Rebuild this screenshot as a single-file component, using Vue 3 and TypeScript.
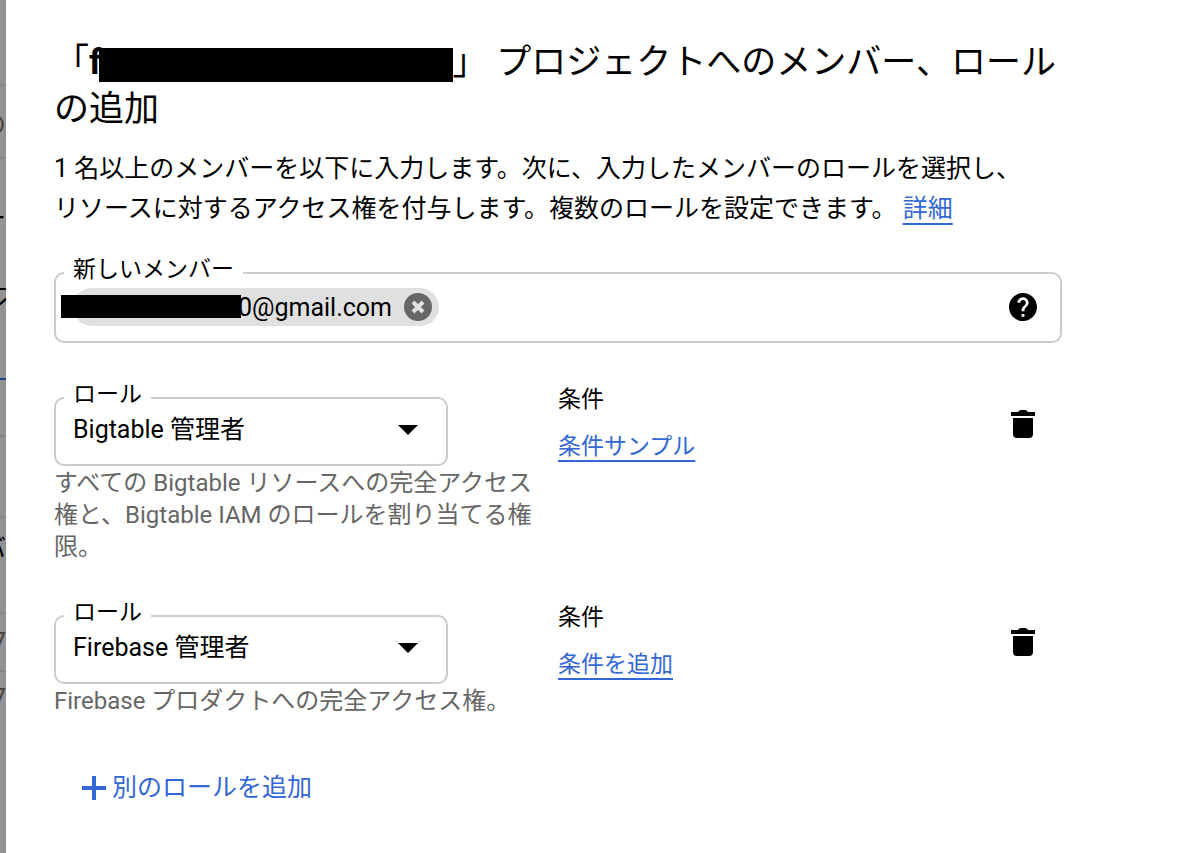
<script setup lang="ts">
import { ref } from 'vue'

interface RoleBinding {
  id: string
  role: string
  description: string
  conditionLink: string
}

const roleOptions: string[] = ['Bigtable 管理者', 'Firebase 管理者']

const bindings = ref<RoleBinding[]>([
  {
    id: 'role-bigtable',
    role: 'Bigtable 管理者',
    description:
      'すべての Bigtable リソースへの完全アクセス権と、Bigtable IAM のロールを割り当てる権限。',
    conditionLink: '条件サンプル',
  },
  {
    id: 'role-firebase',
    role: 'Firebase 管理者',
    description: 'Firebase プロダクトへの完全アクセス権。',
    conditionLink: '条件を追加',
  },
])
</script>

<template>
  <div class="screen">
    <div class="backdrop" aria-hidden="true">
      <div class="strip"></div>
      <div class="strip muted"><span>の</span></div>
      <div class="strip"><span>ー</span></div>
      <div class="strip tab"><span>ス</span></div>
      <div class="strip"></div>
      <div class="strip"></div>
      <div class="strip name"><span>バ</span></div>
      <div class="strip muted"><span>7</span></div>
      <div class="strip muted last"><span>7</span></div>
    </div>

    <main class="panel">
      <h1 class="title">「<b>f</b><span class="redacted"></span>」 プロジェクトへのメンバー、ロールの追加</h1>
      <p class="intro">
        1 名以上のメンバーを以下に入力します。次に、入力したメンバーのロールを選択し、リソースに対するアクセス権を付与します。複数のロールを設定できます。
        <a href="#details">詳細</a>
      </p>

      <fieldset class="field members">
        <legend><label for="new-member">新しいメンバー</label></legend>
        <div class="member-line">
          <span class="chip">
            <span class="chip-text">0@gmail.com</span>
            <button class="icon-button" type="button" aria-label="削除">
              <svg width="28" height="28" viewBox="0 0 28 28">
                <circle cx="14" cy="14" r="14" fill="#666" />
                <path d="M9 9l10 10M19 9L9 19" stroke="#e0e0e0" stroke-width="4" />
              </svg>
            </button>
          </span>
          <input id="new-member" type="text" autocomplete="off" />
          <button class="icon-button help" type="button" aria-label="ヘルプ">
            <svg width="28" height="28" viewBox="2 2 20 20">
              <path
                d="M12 2C6.48 2 2 6.48 2 12s4.48 10 10 10 10-4.48 10-10S17.52 2 12 2zm1 17h-2v-2h2v2zm2.07-7.75l-.9.92C13.45 12.9 13 13.5 13 15h-2v-.5c0-1.1.45-2.1 1.17-2.83l1.24-1.26c.37-.36.59-.86.59-1.41 0-1.1-.9-2-2-2s-2 .9-2 2H8c0-2.21 1.79-4 4-4s4 1.79 4 4c0 .88-.36 1.68-.93 2.25z"
              />
            </svg>
          </button>
        </div>
      </fieldset>

      <section v-for="binding in bindings" :key="binding.id" class="binding">
        <div class="role">
          <fieldset class="field">
            <legend><label :for="binding.id">ロール</label></legend>
            <div class="select-line">
              <select :id="binding.id" v-model="binding.role">
                <option v-for="option in roleOptions" :key="option">{{ option }}</option>
              </select>
              <svg class="caret" width="20" height="10" viewBox="0 0 20 10">
                <path d="M0 0h20L10 10z" />
              </svg>
            </div>
          </fieldset>
          <p class="description">{{ binding.description }}</p>
        </div>
        <div class="condition">
          <p>条件</p>
          <a href="#condition">{{ binding.conditionLink }}</a>
        </div>
        <button class="icon-button trash" type="button" aria-label="ロールを削除">
          <svg width="24" height="28" viewBox="0 0 24 28">
            <path d="M0 2h7q1-2 3-2h4q2 0 3 2h7v4H0zM2 8h20v16a4 4 0 0 1-4 4H6a4 4 0 0 1-4-4z" />
          </svg>
        </button>
      </section>

      <button class="add" type="button">
        <svg width="24" height="24" viewBox="0 0 24 24">
          <path d="M12 0v24M0 12h24" stroke="currentColor" stroke-width="4" />
        </svg>
        別のロールを追加
      </button>
    </main>
  </div>
</template>

<style>
body {
  background: #fff;
}
</style>

<style scoped>
.screen {
  display: flex;
  min-height: 100vh;
  font-family: Roboto, 'Noto Sans CJK JP', sans-serif;
  font-size: 25px;
  color: #000;
}

.screen *,
.screen {
  box-sizing: border-box;
}

.backdrop {
  display: grid;
  flex: 0 0 6px;
  grid-template-rows: 86px 73px 114px 107px 57px 81px 96px 58px 1fr;
  overflow: hidden;
  background: #929292;
}

.strip {
  display: flex;
  align-items: center;
  justify-content: flex-end;
  min-width: 0;
  overflow: hidden;
  border-bottom: 2px solid #858585;
}

.strip:nth-child(3) {
  border-bottom: 0;
}

.strip.tab {
  align-items: flex-start;
  padding-top: 4px;
  border-bottom-color: #1f428a;
}

.strip.tab span {
  margin-right: -12px;
}

.strip.name {
  align-items: flex-start;
  padding-top: 10px;
}

.strip.muted {
  color: #444;
}

.strip.last {
  align-items: flex-start;
  padding-top: 12px;
  border-bottom: 0;
}

.panel {
  flex: 1;
  min-width: 0;
  padding: 39px 138px 40px 48px;
}

.title {
  margin: 0;
  font-size: 35px;
  font-weight: 400;
  line-height: 47px;
}

.redacted {
  display: inline-block;
  width: 354px;
  height: 34px;
  margin-left: -3px;
  vertical-align: -8px;
  background: #000;
}

.intro {
  margin: 16px 0 29px;
  padding-right: 24px;
  line-height: 40px;
}

a {
  color: #3367d6;
  text-decoration: underline;
  text-decoration-thickness: 2px;
  text-underline-offset: 6px;
}

.field {
  min-width: 0;
  margin: 0;
  padding: 0 8px;
  border: 2px solid #ccc;
  border-radius: 10px;
}

.field legend {
  padding: 0 9px 6px;
  font-size: 23px;
  line-height: 24px;
}

.members {
  margin-bottom: 40px;
}

.member-line {
  display: flex;
  align-items: center;
  padding: 0 15px 15px 9px;
}

.chip {
  position: relative;
  display: flex;
  align-items: center;
  justify-content: flex-end;
  gap: 12px;
  width: 366px;
  height: 38px;
  padding-right: 7px;
  border-radius: 19px;
  background: #e0e0e0;
}

.chip::before {
  content: '';
  position: absolute;
  top: 7px;
  left: -12px;
  width: 180px;
  height: 23px;
  background: #000;
}

.member-line input {
  flex: 1;
  min-width: 0;
  height: 38px;
  padding: 0 12px;
  border: 0;
  outline: 0;
  background: none;
  font: inherit;
}

.icon-button {
  display: block;
  padding: 0;
  border: 0;
  background: none;
  line-height: 0;
  cursor: pointer;
}

.binding {
  display: grid;
  grid-template-columns: 504px 1fr auto;
  align-items: start;
  margin-bottom: 38px;
  padding-right: 27px;
}

.role {
  max-width: 484px;
}

.role .field {
  width: 394px;
  max-width: 100%;
}

.select-line {
  position: relative;
  padding-bottom: 17px;
}

select {
  display: block;
  width: 100%;
  height: 34px;
  padding: 0 50px 0 9px;
  border: 0;
  outline: 0;
  appearance: none;
  background: none;
  color: inherit;
  font: inherit;
  line-height: 34px;
}

.caret {
  position: absolute;
  top: 12px;
  right: 20px;
  pointer-events: none;
}

.description {
  margin: 1px 0 0;
  font-size: 24px;
  line-height: 32px;
  color: #666;
}

.condition {
  padding-top: 1px;
  font-size: 23px;
  line-height: 32px;
}

.condition p {
  margin: 0 0 15px;
}

.trash {
  margin-top: 27px;
}

.add {
  display: flex;
  align-items: center;
  gap: 6px;
  margin: 51px 0 0 28px;
  padding: 0;
  border: 0;
  background: none;
  color: #3367d6;
  font: inherit;
  line-height: 40px;
  cursor: pointer;
}
</style>
